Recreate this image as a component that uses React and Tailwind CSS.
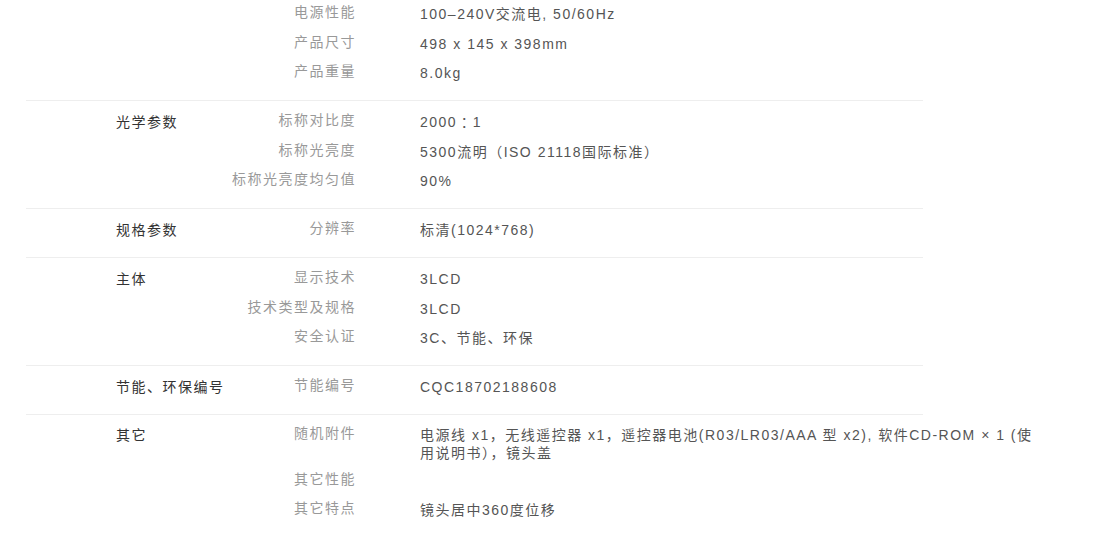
import React from 'react';

const groups = [
    {
        title: '',
        first: true,
        rows: [
            ['电源性能', '100–240V交流电, 50/60Hz'],
            ['产品尺寸', '498 x 145 x 398mm'],
            ['产品重量', '8.0kg'],
        ],
    },
    {
        title: '光学参数',
        rows: [
            [
                '标称对比度',
                <>
                    2000
                    <span
                        className="inline-block h-[18px] leading-[18px] align-top"
                        style={{ fontFamily: '"Noto Sans CJK TC", sans-serif' }}
                    >
                        ：
                    </span>
                    1
                </>,
            ],
            ['标称光亮度', '5300流明（ISO 21118国际标准）'],
            ['标称光亮度均匀值', '90%'],
        ],
    },
    {
        title: '规格参数',
        rows: [['分辨率', '标清(1024*768)']],
    },
    {
        title: '主体',
        rows: [
            ['显示技术', '3LCD'],
            ['技术类型及规格', '3LCD'],
            ['安全认证', '3C、节能、环保'],
        ],
    },
    {
        title: '节能、环保编号',
        rows: [['节能编号', 'CQC18702188608']],
    },
    {
        title: '其它',
        last: true,
        rows: [
            ['随机附件', '电源线 x1，无线遥控器 x1，遥控器电池(R03/LR03/AAA 型 x2), 软件CD-ROM × 1 (使用说明书），镜头盖', true],
            ['其它性能', ''],
            ['其它特点', '镜头居中360度位移'],
        ],
    },
];

const App = () => {
    return (
        <div
            className="w-[1108px] h-[548px] bg-white overflow-hidden text-[14px] tracking-[1.5px]"
            style={{ fontFamily: '"Liberation Sans", Arial, "Noto Sans CJK SC", sans-serif' }}
        >
            {groups.map((g, i) => (
                <div
                    key={i}
                    className={
                        g.first
                            ? 'ml-[26px] w-[897px] flex pt-[5px] pb-[6.5px]'
                            : g.last
                              ? 'ml-[26px] w-[897px] flex border-t border-[#eeeeee] pt-[11px] pb-[6.5px]'
                              : 'ml-[26px] w-[897px] flex border-t border-[#eeeeee] pt-[12px] pb-[6.5px]'
                    }
                >
                    <div className="w-[200px] shrink-0 pl-[90px] leading-[18px] text-[#333333] whitespace-nowrap">
                        {g.title}
                    </div>
                    <div className="flex flex-col">
                        {g.rows.map(([label, value, wrapped], j) => (
                            <div key={j} className={wrapped ? 'flex items-start pb-[9.5px]' : 'flex items-start pb-[11.5px]'}>
                                <div className="w-[130px] shrink-0 text-right leading-[14px] text-[#999999] whitespace-nowrap">
                                    {label}
                                </div>
                                <div className="ml-[64px] w-[618px] shrink-0 h-auto min-h-[18px] leading-[18px] text-[#555555]">
                                    {value}
                                </div>
                            </div>
                        ))}
                    </div>
                </div>
            ))}
        </div>
    );
};

export default App;
